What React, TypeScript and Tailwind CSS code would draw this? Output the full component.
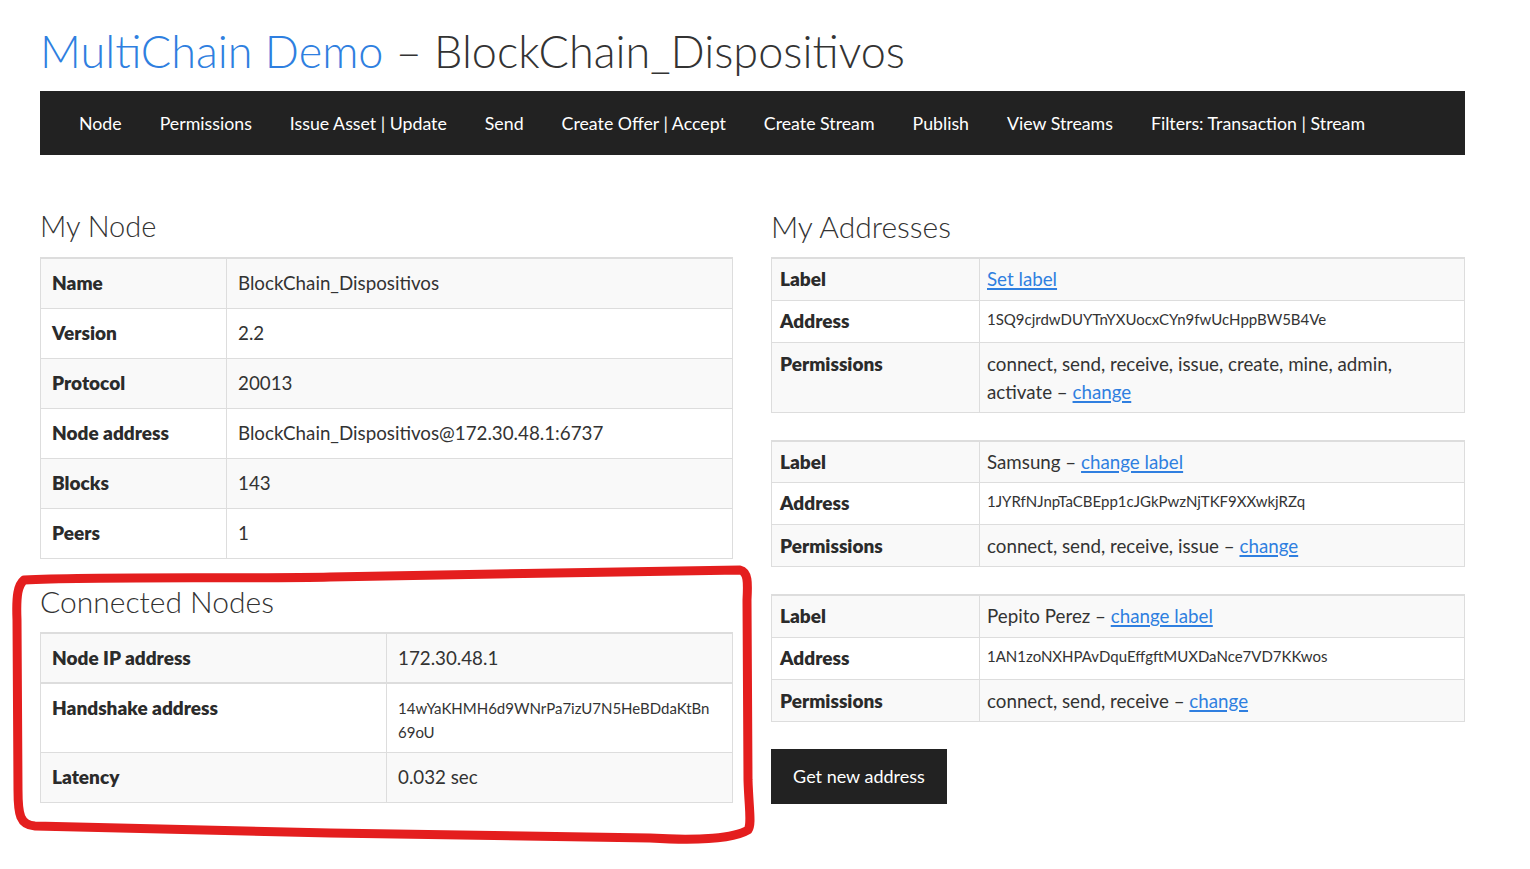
import React from "react";

const navItems = [
  "Node",
  "Permissions",
  "Issue Asset | Update",
  "Send",
  "Create Offer | Accept",
  "Create Stream",
  "Publish",
  "View Streams",
  "Filters: Transaction | Stream",
];

function Row({ label, children, striped, labelW, h }: { label: string; children: React.ReactNode; striped?: boolean; labelW: string; h: string }) {
  return (
    <tr className={striped ? "bg-[#f9f9f9]" : "bg-white"}>
      <td className={`${labelW} ${h} border border-[#dddddd] align-top px-[11px] font-extrabold text-[19px] text-[#2b2b2b]`}>{label}</td>
      <td className={`${h} border border-[#dddddd] align-top px-[11px] text-[18.75px] text-[#333]`}>{children}</td>
    </tr>
  );
}

function Link({ children }: { children: React.ReactNode }) {
  return <a className="text-[#2f7fe0] underline decoration-[1.5px] underline-offset-2">{children}</a>;
}

function AddrTable({ label, address, perms }: { label: React.ReactNode; address: string; perms: React.ReactNode }) {
  return (
    <table className="w-full border-collapse border-t-2 border-[#dddddd]">
      <tbody>
        <tr className="bg-[#f9f9f9]">
          <td className="w-[208px] h-[42px] border border-[#dddddd] px-2 align-middle font-extrabold text-[19px] text-[#2b2b2b]">Label</td>
          <td className="h-[42px] border border-[#dddddd] px-[7px] align-middle text-[18.75px] text-[#333]">{label}</td>
        </tr>
        <tr className="bg-white">
          <td className="h-[42px] border border-[#dddddd] px-2 align-middle font-extrabold text-[19px] text-[#2b2b2b]">Address</td>
          <td className="h-[42px] border border-[#dddddd] px-[7px] align-middle text-[15px] text-[#333] pb-1">{address}</td>
        </tr>
        <tr className="bg-[#f9f9f9]">
          <td className="h-[42px] border border-[#dddddd] px-2 pt-[7px] align-top font-extrabold text-[19px] leading-[28px] text-[#2b2b2b]">Permissions</td>
          <td className="h-[42px] border border-[#dddddd] px-[7px] pt-[7px] pb-[6px] align-top text-[18.75px] leading-[28px] text-[#333]">{perms}</td>
        </tr>
      </tbody>
    </table>
  );
}

export default function App() {
  return (
    <div className="relative min-h-[869px] bg-white font-[family-name:Lato,sans-serif] text-[#333]">
      <div className="ml-10 w-[1425px]">
        <h1 className="pt-[24px] text-[45px] font-light leading-[54px] text-[#333]">
          <span className="text-[#2f7fe0]">MultiChain Demo</span> – BlockChain_Dispositivos
        </h1>
        <nav className="mt-[13px] flex h-16 items-center bg-[#222222] pl-5">
          {navItems.map((n) => (
            <span key={n} className="px-[19px] text-[17.75px] text-white">{n}</span>
          ))}
        </nav>

        <div className="grid grid-cols-[693px_694px] gap-x-[38px]">
          <div>
            <h2 className="mt-[53px] mb-[13px] text-[29px] font-light leading-[36px]">My Node</h2>
            <table className="w-full border-collapse border-t-2 border-[#dddddd]">
              <tbody className="[&_td]:pt-[12px] [&_td]:leading-[24px]">
                <Row label="Name" striped labelW="w-[186px]" h="h-[50px]">BlockChain_Dispositivos</Row>
                <Row label="Version" labelW="w-[186px]" h="h-[50px]">2.2</Row>
                <Row label="Protocol" striped labelW="w-[186px]" h="h-[50px]">20013</Row>
                <Row label="Node address" labelW="w-[186px]" h="h-[50px]">BlockChain_Dispositivos@172.30.48.1:6737</Row>
                <Row label="Blocks" striped labelW="w-[186px]" h="h-[50px]">143</Row>
                <Row label="Peers" labelW="w-[186px]" h="h-[50px]">1</Row>
              </tbody>
            </table>

            <h2 className="mt-[24px] mb-[13px] text-[30px] font-light leading-[36px]">Connected Nodes</h2>
            <table className="w-full border-collapse border-t-2 border-[#dddddd]">
              <tbody className="[&_td]:pt-[12px] [&_td]:leading-[24px]">
                <Row label="Node IP address" striped labelW="w-[346px]" h="h-[50px]">172.30.48.1</Row>
                <tr className="bg-white">
                  <td className="h-[70px] border border-[#dddddd] border-t-2 align-top px-[11px] font-extrabold text-[19px] text-[#2b2b2b]">Handshake address</td>
                  <td className="h-[70px] border border-[#dddddd] border-t-2 align-top px-[11px] text-[15px] text-[#333]">
                    14wYaKHMH6d9WNrPa7izU7N5HeBDdaKtBn<br />69oU
                  </td>
                </tr>
                <Row label="Latency" striped labelW="w-[346px]" h="h-[50px]">0.032 sec</Row>
              </tbody>
            </table>
          </div>

          <div>
            <h2 className="mt-[53px] mb-[13px] text-[30px] font-light leading-[36px]">My Addresses</h2>
            <div className="flex flex-col gap-[27px]">
              <AddrTable
                label={<Link>Set label</Link>}
                address="1SQ9cjrdwDUYTnYXUocxCYn9fwUcHppBW5B4Ve"
                perms={<>connect, send, receive, issue, create, mine, admin,<br />activate – <Link>change</Link></>}
              />
              <AddrTable
                label={<>Samsung – <Link>change label</Link></>}
                address="1JYRfNJnpTaCBEpp1cJGkPwzNjTKF9XXwkjRZq"
                perms={<>connect, send, receive, issue – <Link>change</Link></>}
              />
              <AddrTable
                label={<>Pepito Perez – <Link>change label</Link></>}
                address="1AN1zoNXHPAvDquEffgftMUXDaNce7VD7KKwos"
                perms={<>connect, send, receive – <Link>change</Link></>}
              />
              <button className="flex h-[55px] w-[176px] items-center justify-center bg-[#222222] text-[18px] text-white">
                Get new address
              </button>
            </div>
          </div>
        </div>
      </div>

      <svg className="pointer-events-none absolute left-0 top-0" width="1530" height="869" viewBox="0 0 1530 869">
        <path
          d="M 24 580 C 100 576, 250 579, 330 577 C 450 575, 600 572, 740 570 C 748 572, 748 582, 747 600 L 748 780 C 749 810, 752 824, 748 830 C 735 838, 700 841, 650 838 L 330 833 C 200 830, 100 828, 35 826 C 20 825, 18 815, 18 790 L 17 620 C 16 595, 18 585, 24 580 Z"
          fill="none"
          stroke="#e41e1e"
          strokeWidth="9"
          strokeLinejoin="round"
        />
      </svg>
    </div>
  );
}
